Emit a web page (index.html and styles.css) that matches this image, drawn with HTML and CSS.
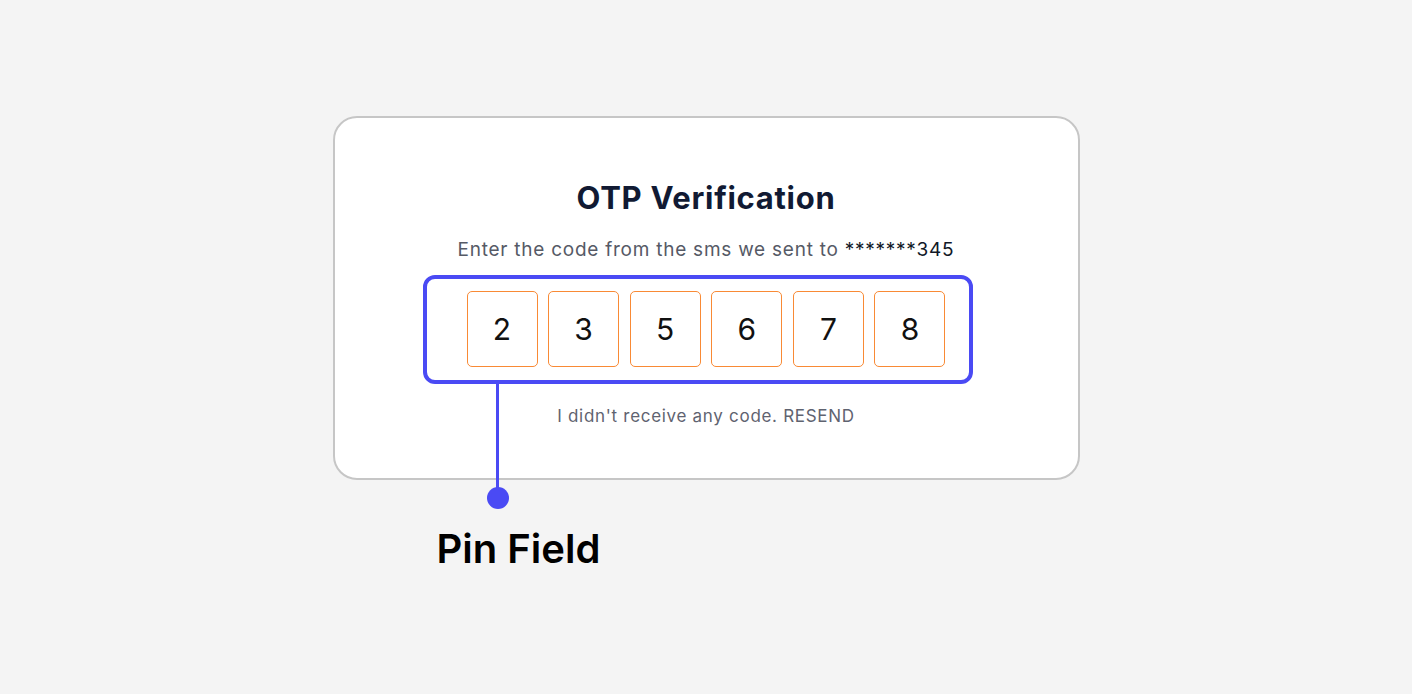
FILE: index.html
```html
<!DOCTYPE html>
<html lang="en">
<head>
  <meta charset="UTF-8">
  <title>Pin Field</title>
  <link rel="stylesheet" href="styles.css">
</head>
<body>
  <div class="stage">
    <div class="card">
      <h1 class="title">OTP Verification</h1>
      <p class="subtitle">Enter the code from the sms we sent to <span class="phone">*******345</span></p>
      <div class="pins">
        <div class="pin">2</div>
        <div class="pin">3</div>
        <div class="pin">5</div>
        <div class="pin">6</div>
        <div class="pin">7</div>
        <div class="pin">8</div>
      </div>
      <p class="resend">I didn't receive any code. RESEND</p>

      <!-- annotation overlay -->
      <div class="highlight"></div>
      <div class="connector"></div>
      <div class="dot"></div>
      <div class="label">Pin Field</div>
    </div>
  </div>
</body>
</html>
```

FILE: styles.css
```css
body {
  margin: 0;
  background: #f4f4f4;
  font-family: Inter, "Noto Sans", sans-serif;
}
.stage {
  height: 694px;
  display: flex;
  justify-content: center;
  padding-top: 116px;
  box-sizing: border-box;
}
.card {
  position: relative;
  width: 747px;
  height: 364px;
  box-sizing: border-box;
  background: #fff;
  border: 2px solid #c6c6c6;
  border-radius: 24px;
  padding-top: 62px;
  display: flex;
  flex-direction: column;
  align-items: center;
}
.title {
  margin: 0;
  font-size: 31px;
  line-height: 36px;
  font-weight: 700;
  letter-spacing: 0.7px;
  color: #111a33;
}
.subtitle {
  margin: 22px 0 0;
  font-size: 19px;
  line-height: 24px;
  letter-spacing: 0.75px;
  color: #565a66;
}
.phone {
  color: #111827;
}
.pins {
  margin-top: 29px;
  display: flex;
  gap: 10.6px;
}
.pin {
  width: 71px;
  height: 76px;
  box-sizing: border-box;
  border: 1.5px solid #f98a35;
  border-radius: 5px;
  display: flex;
  align-items: center;
  justify-content: center;
  font-size: 30px;
  color: #111;
}
.resend {
  margin: 39px 0 0;
  font-size: 17px;
  line-height: 20px;
  letter-spacing: 0.7px;
  color: #5f6370;
}

/* annotation */
.highlight {
  position: absolute;
  left: 88px;
  top: 157px;
  width: 550px;
  height: 109px;
  box-sizing: border-box;
  border: 4px solid #4a4af4;
  border-radius: 12px;
}
.connector {
  position: absolute;
  left: 161px;
  top: 266px;
  width: 3px;
  height: 114px;
  background: #4a4af4;
}
.dot {
  position: absolute;
  left: 152px;
  top: 369px;
  width: 22px;
  height: 22px;
  border-radius: 50%;
  background: #4a4af4;
}
.label {
  position: absolute;
  left: 102px;
  top: 406px;
  font-size: 40px;
  line-height: 50px;
  font-weight: 600;
  color: #000;
  white-space: nowrap;
}
```
